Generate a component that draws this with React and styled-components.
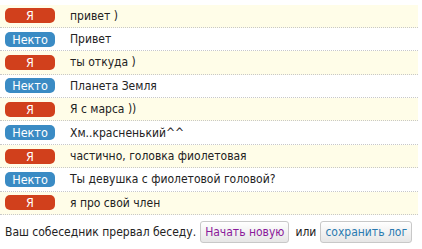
import React from 'react';
import styled, { createGlobalStyle } from 'styled-components';

const GlobalStyle = createGlobalStyle`
  body {
    margin: 0;
    background: #fff;
    font-family: "DejaVu Sans Condensed", "DejaVu Sans", sans-serif;
  }
`;

const Container = styled.div`
  width: 418px;
  padding-top: 4.5px;
`;

const Row = styled.div`
  display: flex;
  align-items: center;
  height: 22.4px;
  border-bottom: 1px dotted #c8c8c8;
  background: ${(p) => (p.$me ? '#fffde8' : '#fff')};
`;

const Badge = styled.span`
  flex: none;
  width: 50px;
  height: 15px;
  margin-left: 5px;
  margin-right: 15px;
  border-radius: 5px;
  background: ${(p) => (p.$me ? '#d1401c' : '#3a8bc4')};
  color: #fff;
  font-size: 12.5px;
  line-height: 15px;
  text-align: center;
`;

const Text = styled.span`
  font-size: 12px;
  color: #222;
`;

const Footer = styled.div`
  display: flex;
  align-items: center;
  white-space: nowrap;
  padding: 6px 0 0 5px;
  font-size: 12px;
  color: #222;
`;

const Button = styled.button`
  font-family: inherit;
  font-size: 12px;
  height: 22px;
  padding: 0 4px;
  margin: 0 ${(p) => p.$gap}px 0 4px;
  border: 1px solid #c8c8c8;
  border-radius: 3px;
  background: linear-gradient(#ffffff, #e6e6e6);
  color: ${(p) => p.$color};
  cursor: pointer;
`;

const messages = [
  { me: true, text: 'привет )' },
  { me: false, text: 'Привет' },
  { me: true, text: 'ты откуда )' },
  { me: false, text: 'Планета Земля' },
  { me: true, text: 'Я с марса ))' },
  { me: false, text: 'Хм..красненький^^' },
  { me: true, text: 'частично, головка фиолетовая' },
  { me: false, text: 'Ты девушка с фиолетовой головой?' },
  { me: true, text: 'я про свой член' },
];

const App = () => (
  <Container>
    <GlobalStyle />
    {messages.map((m, i) => (
      <Row key={i} $me={m.me}>
        <Badge $me={m.me}>{m.me ? 'Я' : 'Некто'}</Badge>
        <Text>{m.text}</Text>
      </Row>
    ))}
    <Footer>
      Ваш собеседник прервал беседу.
      <Button $color="#8a1a9a" $gap={6}>Начать новую</Button>
      или
      <Button $color="#2a7ab0" $gap={0}>сохранить лог</Button>
    </Footer>
  </Container>
);

export default App;
